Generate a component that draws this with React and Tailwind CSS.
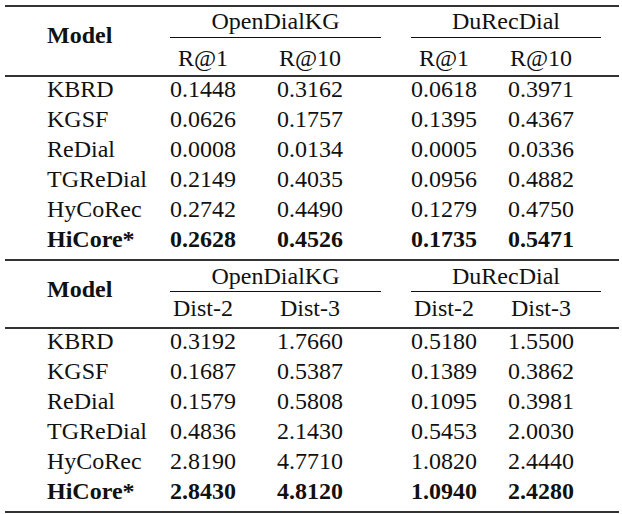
import React from 'react';

const tables = [
  {
    metrics: ['R@1', 'R@10', 'R@1', 'R@10'],
    rows: [
      ['KBRD', '0.1448', '0.3162', '0.0618', '0.3971'],
      ['KGSF', '0.0626', '0.1757', '0.1395', '0.4367'],
      ['ReDial', '0.0008', '0.0134', '0.0005', '0.0336'],
      ['TGReDial', '0.2149', '0.4035', '0.0956', '0.4882'],
      ['HyCoRec', '0.2742', '0.4490', '0.1279', '0.4750'],
      ['HiCore*', '0.2628', '0.4526', '0.1735', '0.5471'],
    ],
  },
  {
    metrics: ['Dist-2', 'Dist-3', 'Dist-2', 'Dist-3'],
    rows: [
      ['KBRD', '0.3192', '1.7660', '0.5180', '1.5500'],
      ['KGSF', '0.1687', '0.5387', '0.1389', '0.3862'],
      ['ReDial', '0.1579', '0.5808', '0.1095', '0.3981'],
      ['TGReDial', '0.4836', '2.1430', '0.5453', '2.0030'],
      ['HyCoRec', '2.8190', '4.7710', '1.0820', '2.4440'],
      ['HiCore*', '2.8430', '4.8120', '1.0940', '2.4280'],
    ],
  },
];

// value columns, offsets tuned so centres sit at 203 / 310 / 444 / 541
function Cells({ values }) {
  return (
    <>
      <div className="w-[80px] text-center">{values[0]}</div>
      <div className="ml-[27px] w-[80px] text-center">{values[1]}</div>
      <div className="ml-[54px] w-[80px] text-center">{values[2]}</div>
      <div className="ml-[17px] w-[80px] text-center">{values[3]}</div>
    </>
  );
}

function Section({ data, first }) {
  return (
    <div>
      <div className="flex border-b-2 border-[#333]">
        <div className="w-[158px] pl-[42px] pt-[16px] font-bold">Model</div>
        <div className="flex flex-col">
          <div className={`flex h-[31px] ${first ? 'pt-[2px]' : 'pt-[3px]'}`}>
            <div className="ml-[7px] w-[211px] border-b border-[#111] text-center">OpenDialKG</div>
            <div className="ml-[30px] w-[190px] border-b border-[#111] text-center">DuRecDial</div>
          </div>
          <div className={`flex ${first ? 'h-[37px] pt-[8px]' : 'h-[35px] pt-[4px]'}`}>
            <Cells values={data.metrics} />
          </div>
        </div>
      </div>
      <div className="pb-[2px]">
        {data.rows.map((r) => {
          const bold = r[0] === 'HiCore*';
          return (
            <div key={r[0]} className={`flex h-[30px] ${bold ? 'font-bold' : ''}`}>
              <div className="w-[158px] pl-[42px]">{r[0]}</div>
              <Cells values={r.slice(1)} />
            </div>
          );
        })}
      </div>
    </div>
  );
}

export default function App() {
  return (
    <div className="w-[622px] h-[514px] bg-white pt-[5px] text-[#111] font-['Liberation_Serif','Times_New_Roman',serif]">
      <div className="ml-[5px] w-[614px] border-t-2 border-[#333] text-[24px] leading-[24px]">
        <div className="border-b-2 border-[#333]">
          <Section data={tables[0]} first />
        </div>
        <div className="border-b-2 border-[#333]">
          <Section data={tables[1]} />
        </div>
      </div>
    </div>
  );
}
